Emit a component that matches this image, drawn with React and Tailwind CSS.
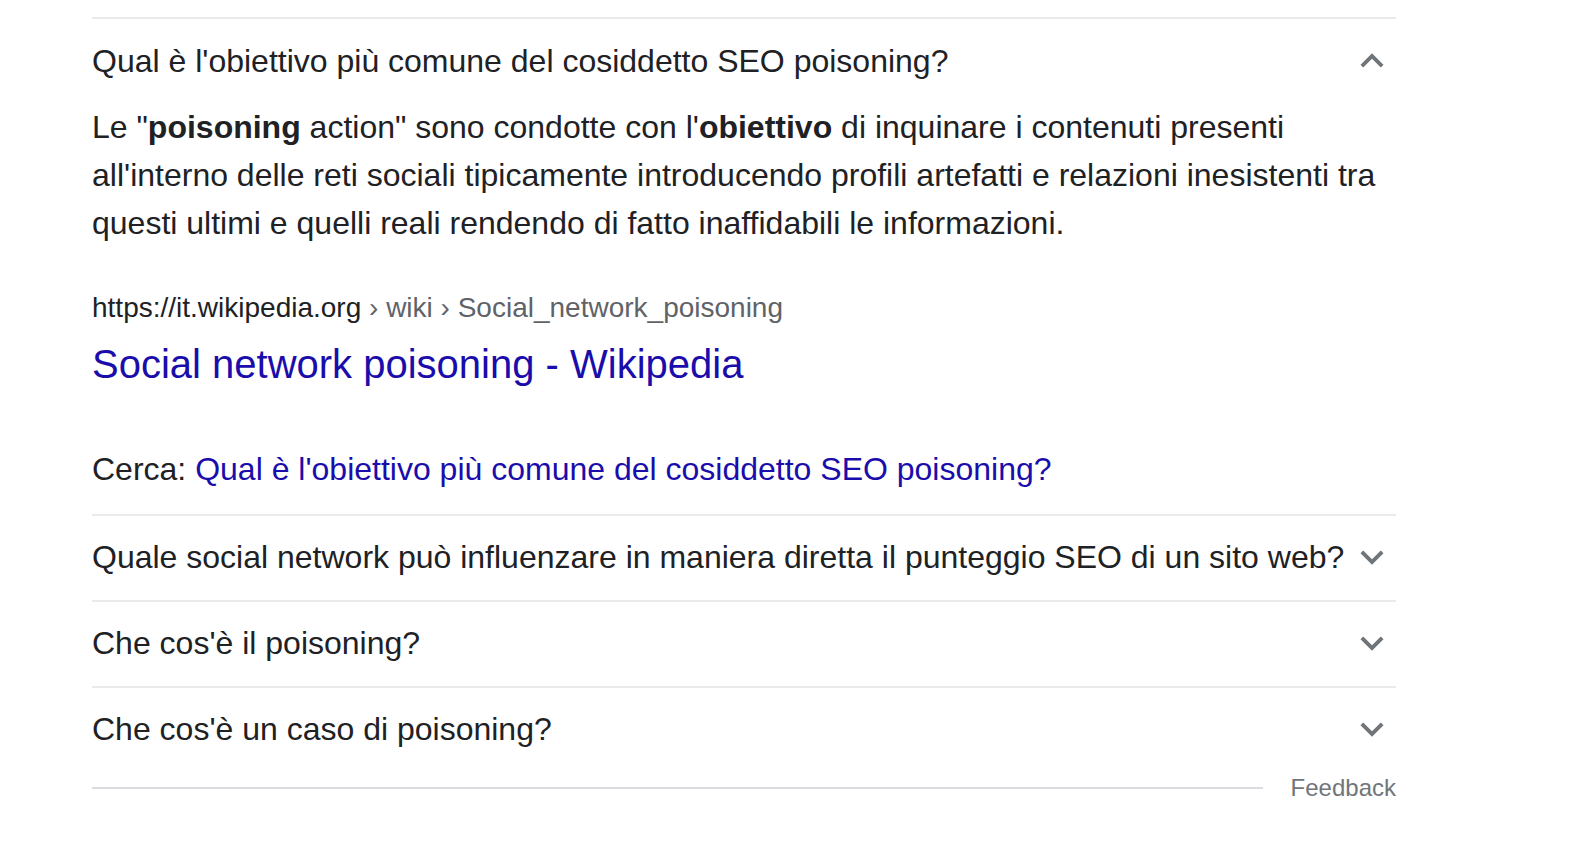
import { useState } from "react";

const questions = [
    "Qual è l'obiettivo più comune del cosiddetto SEO poisoning?",
    "Quale social network può influenzare in maniera diretta il punteggio SEO di un sito web?",
    "Che cos'è il poisoning?",
    "Che cos'è un caso di poisoning?",
];

function Chevron({ up }) {
    return (
        <svg viewBox="0 0 24 24" className="w-[46px] h-[46px] mr-[1px] shrink-0" fill="#70757a">
            {up ? (
                <path d="M12 8l-6 6 1.41 1.41L12 10.83l4.59 4.58L18 14z" />
            ) : (
                <path d="M16.59 8.59L12 13.17 7.41 8.59 6 10l6 6 6-6z" />
            )}
        </svg>
    );
}

function Answer() {
    return (
        <div>
            <div className="text-[32px] leading-[48px] text-[#202124]">
                Le "<b>poisoning</b> action" sono condotte con l'<b>obiettivo</b> di inquinare i contenuti
                presenti all'interno delle reti sociali tipicamente introducendo profili artefatti e relazioni
                inesistenti tra questi ultimi e quelli reali rendendo di fatto inaffidabili le informazioni.
            </div>

            <div className="mt-[41px] text-[28px] leading-[40px] text-[#202124]">
                https://it.wikipedia.org
                <span className="text-[#5f6368]"> › wiki › Social_network_poisoning</span>
            </div>
            <div className="pt-[10px] text-[40px] leading-[52px] text-[#1a0dab]">
                Social network poisoning - Wikipedia
            </div>

            <div className="mt-[55px] mb-[21px] text-[32px] leading-[48px] text-[#202124]">
                Cerca: <span className="text-[#1a0dab]">{questions[0]}</span>
            </div>
        </div>
    );
}

export default function App() {
    const [open, setOpen] = useState(0);

    return (
        <div
            className="min-h-screen bg-white pt-[17px]"
            style={{ fontFamily: '"Liberation Sans", Arial, sans-serif' }}
        >
            <div className="ml-[92px] w-[1304px]">
                {questions.map((q, i) => (
                    <div key={i} className="border-t-2 border-[#ebebeb]">
                        <div
                            className={
                                i === 0
                                    ? "h-[84px] flex items-center justify-between cursor-pointer"
                                    : "h-[84px] pb-[2px] flex items-center justify-between cursor-pointer"
                            }
                            onClick={() => setOpen(open === i ? -1 : i)}
                        >
                            <span className="text-[32px] leading-[40px] text-[#202124]">{q}</span>
                            <Chevron up={open === i} />
                        </div>
                        {open === i && i === 0 && <Answer />}
                    </div>
                ))}

                <div className="h-[32px] flex items-center">
                    <div className="flex-1 h-[2px] bg-[#dadce0]"></div>
                    <span className="ml-[28px] text-[24px] leading-[32px] text-[#70757a]">Feedback</span>
                </div>
            </div>
        </div>
    );
}
